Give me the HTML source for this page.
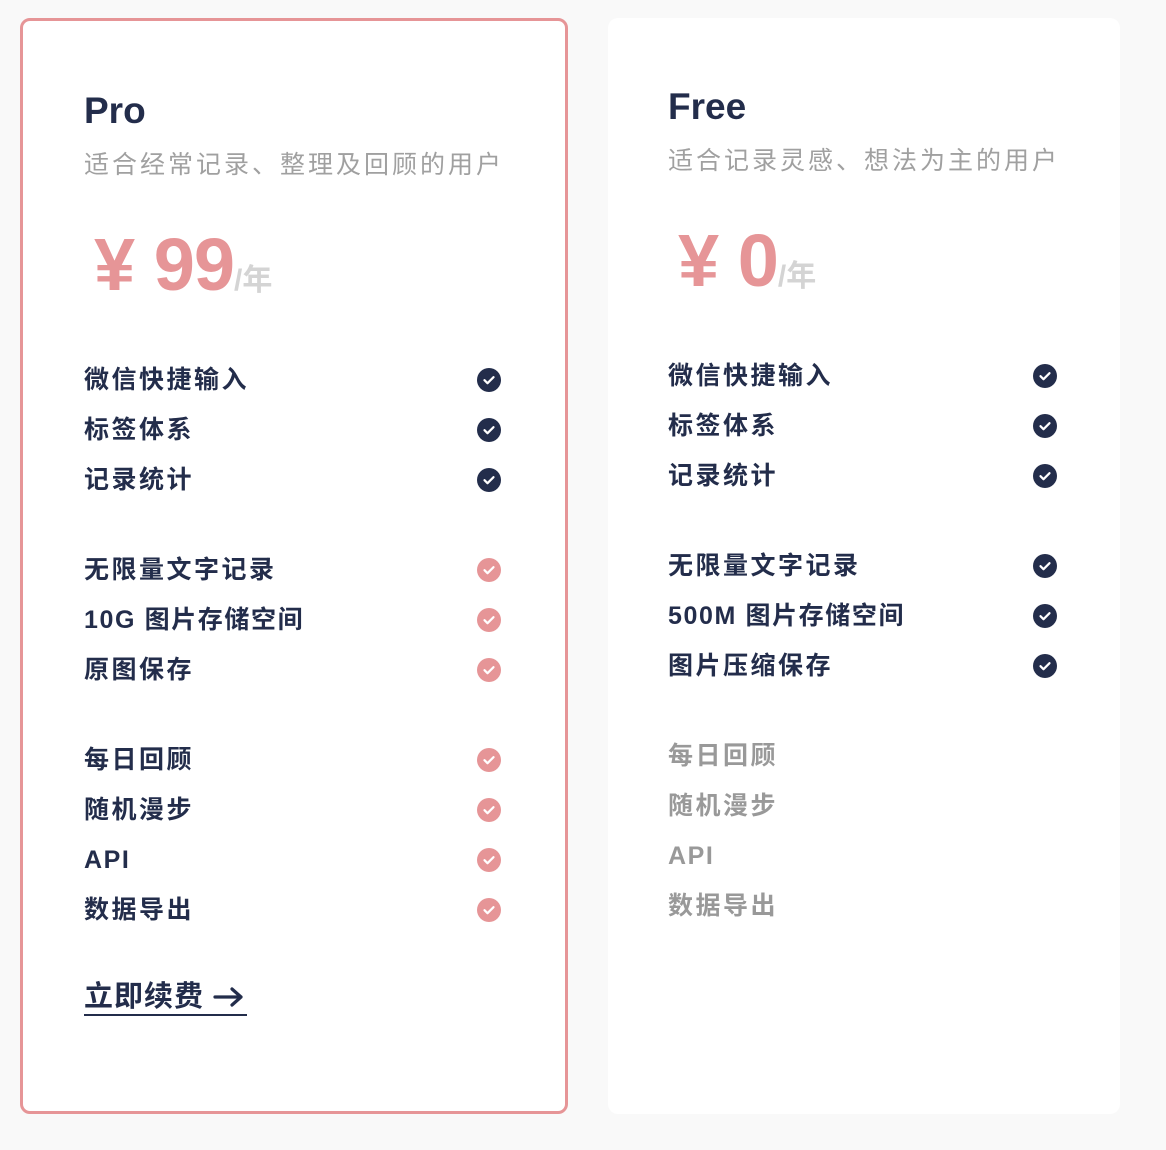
<!DOCTYPE html>
<html><head><meta charset="utf-8"><style>
*{margin:0;padding:0;box-sizing:border-box}
html,body{width:1166px;height:1150px;background:#f9f9f9;overflow:hidden;font-family:"Liberation Sans","Noto Sans CJK SC",sans-serif}
.card{position:absolute;background:#fff}
#pro{left:20px;top:18px;width:548px;height:1096px;border:3px solid #e69597;border-radius:10px}
#free{left:608px;top:18px;width:512px;height:1096px;border-radius:10px}
.t{position:absolute;white-space:nowrap}
.title{font-size:37px;font-weight:bold;color:#232d4b}
.sub{font-size:25px;color:#a0a0a0;letter-spacing:3px}
.price{font-size:74px;font-weight:bold;color:#e69597;letter-spacing:-1px}
.price span{font-size:30px;color:#d4d4d4;font-weight:bold;letter-spacing:0}
.f{font-size:25px;font-weight:bold;color:#232d4b;letter-spacing:2.5px;line-height:30px}
.f.n{letter-spacing:1.6px}
.g{color:#999}
.c{position:absolute;width:24px;height:24px;border-radius:50%;background:#232d4b}
.c.p{background:#e69597}
.c svg{position:absolute;left:0;top:0}
.link{font-size:29px;font-weight:bold;color:#232d4b;letter-spacing:1px;border-bottom:2px solid #232d4b;line-height:34px;padding-right:2px}
</style></head><body>
<div class="card" id="pro"></div>
<div class="card" id="free"></div>

<div class="t title" style="left:84px;top:90px">Pro</div>
<div class="t sub" style="left:84px;top:145px">适合经常记录、整理及回顾的用户</div>
<div class="t price" style="left:94px;top:222px">¥ 99<span>/年</span></div>

<div class="t title" style="left:668px;top:86px">Free</div>
<div class="t sub" style="left:668px;top:141px">适合记录灵感、想法为主的用户</div>
<div class="t price" style="left:678px;top:218px">¥ 0<span>/年</span></div>

<div class="t f" style="left:84px;top:365px">微信快捷输入</div>
<div class="t f" style="left:84px;top:415px">标签体系</div>
<div class="t f" style="left:84px;top:465px">记录统计</div>
<div class="t f" style="left:84px;top:555px">无限量文字记录</div>
<div class="t f n" style="left:84px;top:605px">10G 图片存储空间</div>
<div class="t f" style="left:84px;top:655px">原图保存</div>
<div class="t f" style="left:84px;top:745px">每日回顾</div>
<div class="t f" style="left:84px;top:795px">随机漫步</div>
<div class="t f n" style="left:84px;top:845px">API</div>
<div class="t f" style="left:84px;top:895px">数据导出</div>
<div class="t link" style="left:84px;top:980px">立即续费 <svg width="32" height="24" viewBox="0 0 32 24" style="vertical-align:-3px"><path d="M2 12h26M19 4l9 8-9 8" fill="none" stroke="#232d4b" stroke-width="3.2" stroke-linecap="round" stroke-linejoin="round"/></svg></div>

<div class="t f" style="left:668px;top:361px">微信快捷输入</div>
<div class="t f" style="left:668px;top:411px">标签体系</div>
<div class="t f" style="left:668px;top:461px">记录统计</div>
<div class="t f" style="left:668px;top:551px">无限量文字记录</div>
<div class="t f n" style="left:668px;top:601px">500M 图片存储空间</div>
<div class="t f" style="left:668px;top:651px">图片压缩保存</div>
<div class="t f g" style="left:668px;top:741px">每日回顾</div>
<div class="t f g" style="left:668px;top:791px">随机漫步</div>
<div class="t f g n" style="left:668px;top:841px">API</div>
<div class="t f g" style="left:668px;top:891px">数据导出</div>

<div class="c" style="left:477px;top:368px"><svg width="24" height="24"><path d="M7.5 12.2l3 3 6-6" fill="none" stroke="#fff" stroke-width="2.2" stroke-linecap="round" stroke-linejoin="round"/></svg></div>
<div class="c" style="left:477px;top:418px"><svg width="24" height="24"><path d="M7.5 12.2l3 3 6-6" fill="none" stroke="#fff" stroke-width="2.2" stroke-linecap="round" stroke-linejoin="round"/></svg></div>
<div class="c" style="left:477px;top:468px"><svg width="24" height="24"><path d="M7.5 12.2l3 3 6-6" fill="none" stroke="#fff" stroke-width="2.2" stroke-linecap="round" stroke-linejoin="round"/></svg></div>
<div class="c p" style="left:477px;top:558px"><svg width="24" height="24"><path d="M7.5 12.2l3 3 6-6" fill="none" stroke="#fff" stroke-width="2.2" stroke-linecap="round" stroke-linejoin="round"/></svg></div>
<div class="c p" style="left:477px;top:608px"><svg width="24" height="24"><path d="M7.5 12.2l3 3 6-6" fill="none" stroke="#fff" stroke-width="2.2" stroke-linecap="round" stroke-linejoin="round"/></svg></div>
<div class="c p" style="left:477px;top:658px"><svg width="24" height="24"><path d="M7.5 12.2l3 3 6-6" fill="none" stroke="#fff" stroke-width="2.2" stroke-linecap="round" stroke-linejoin="round"/></svg></div>
<div class="c p" style="left:477px;top:748px"><svg width="24" height="24"><path d="M7.5 12.2l3 3 6-6" fill="none" stroke="#fff" stroke-width="2.2" stroke-linecap="round" stroke-linejoin="round"/></svg></div>
<div class="c p" style="left:477px;top:798px"><svg width="24" height="24"><path d="M7.5 12.2l3 3 6-6" fill="none" stroke="#fff" stroke-width="2.2" stroke-linecap="round" stroke-linejoin="round"/></svg></div>
<div class="c p" style="left:477px;top:848px"><svg width="24" height="24"><path d="M7.5 12.2l3 3 6-6" fill="none" stroke="#fff" stroke-width="2.2" stroke-linecap="round" stroke-linejoin="round"/></svg></div>
<div class="c p" style="left:477px;top:898px"><svg width="24" height="24"><path d="M7.5 12.2l3 3 6-6" fill="none" stroke="#fff" stroke-width="2.2" stroke-linecap="round" stroke-linejoin="round"/></svg></div>

<div class="c" style="left:1033px;top:364px"><svg width="24" height="24"><path d="M7.5 12.2l3 3 6-6" fill="none" stroke="#fff" stroke-width="2.2" stroke-linecap="round" stroke-linejoin="round"/></svg></div>
<div class="c" style="left:1033px;top:414px"><svg width="24" height="24"><path d="M7.5 12.2l3 3 6-6" fill="none" stroke="#fff" stroke-width="2.2" stroke-linecap="round" stroke-linejoin="round"/></svg></div>
<div class="c" style="left:1033px;top:464px"><svg width="24" height="24"><path d="M7.5 12.2l3 3 6-6" fill="none" stroke="#fff" stroke-width="2.2" stroke-linecap="round" stroke-linejoin="round"/></svg></div>
<div class="c" style="left:1033px;top:554px"><svg width="24" height="24"><path d="M7.5 12.2l3 3 6-6" fill="none" stroke="#fff" stroke-width="2.2" stroke-linecap="round" stroke-linejoin="round"/></svg></div>
<div class="c" style="left:1033px;top:604px"><svg width="24" height="24"><path d="M7.5 12.2l3 3 6-6" fill="none" stroke="#fff" stroke-width="2.2" stroke-linecap="round" stroke-linejoin="round"/></svg></div>
<div class="c" style="left:1033px;top:654px"><svg width="24" height="24"><path d="M7.5 12.2l3 3 6-6" fill="none" stroke="#fff" stroke-width="2.2" stroke-linecap="round" stroke-linejoin="round"/></svg></div>
</body></html>
